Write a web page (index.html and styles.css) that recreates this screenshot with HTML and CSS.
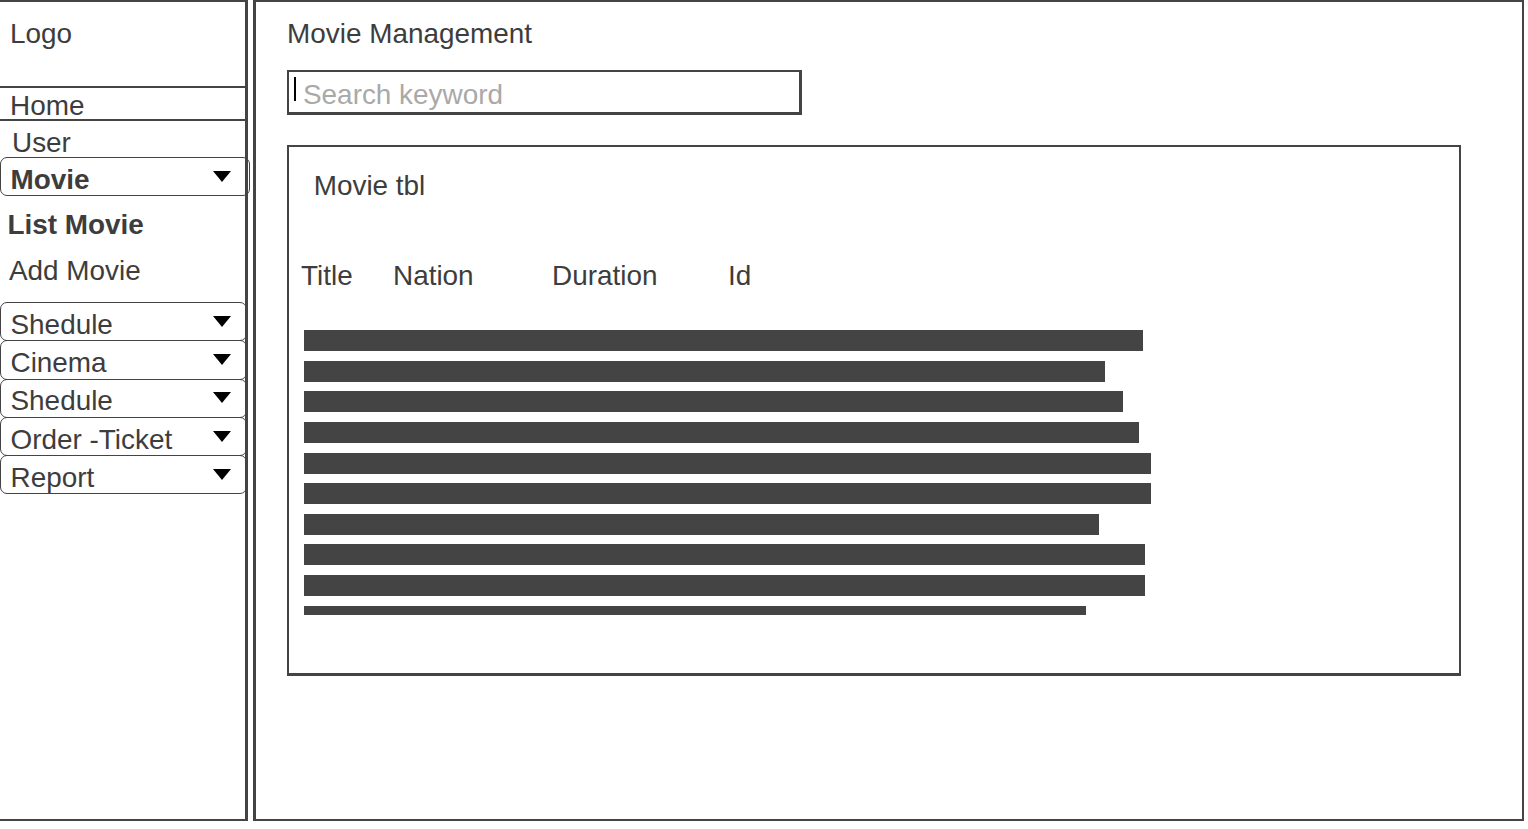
FILE: index.html
```html
<!DOCTYPE html>
<html lang="en">
<head>
<meta charset="utf-8">
<title>Movie Management</title>
<link rel="stylesheet" href="styles.css">
</head>
<body>
<div class="page">
  <aside class="sidebar">
    <div class="logo">Logo</div>
    <div class="nav-home">Home</div>
    <div class="nav-user">User</div>
    <div class="menu menu-open"><span class="menu-label bold">Movie</span><span class="caret"></span></div>
    <div class="sub sub-list bold">List Movie</div>
    <div class="sub sub-add">Add Movie</div>
    <div class="menu-group">
      <div class="menu"><span class="menu-label">Shedule</span><span class="caret"></span></div>
      <div class="menu"><span class="menu-label">Cinema</span><span class="caret"></span></div>
      <div class="menu"><span class="menu-label">Shedule</span><span class="caret"></span></div>
      <div class="menu"><span class="menu-label">Order -Ticket</span><span class="caret"></span></div>
      <div class="menu"><span class="menu-label">Report</span><span class="caret"></span></div>
    </div>
  </aside>
  <main class="main">
    <h1 class="title">Movie Management</h1>
    <div class="search"><span class="cursor"></span><input class="search-input" type="text" placeholder="Search keyword"></div>
    <section class="table">
      <div class="table-caption">Movie tbl</div>
      <div class="table-head">
        <span>Title</span><span>Nation</span><span>Duration</span><span>Id</span>
      </div>
      <div class="bars">
        <div class="bar" style="width:839px"></div>
        <div class="bar" style="width:801px"></div>
        <div class="bar" style="width:819px"></div>
        <div class="bar" style="width:835px"></div>
        <div class="bar" style="width:847px"></div>
        <div class="bar" style="width:847px"></div>
        <div class="bar" style="width:795px"></div>
        <div class="bar" style="width:841px"></div>
        <div class="bar" style="width:841px"></div>
        <div class="bar" style="width:782px"></div>
      </div>
    </section>
  </main>
</div>
</body>
</html>
```

FILE: styles.css
```css
* {
  box-sizing: border-box;
}

html,
body {
  margin: 0;
  padding: 0;
  background: #fff;
}

body {
  font-family: "Liberation Sans", Arial, sans-serif;
  font-size: 27.9px;
  line-height: 32px;
  color: #3d3d3d;
}

.bold {
  font-weight: bold;
}

.page {
  display: flex;
  align-items: flex-start;
  width: 1528px;
  height: 829px;
  overflow: hidden;
}

/* ---------- sidebar ---------- */
.sidebar {
  flex: none;
  width: 248px;
  height: 821px;
  border-top: 2px solid #444;
  border-bottom: 2px solid #444;
  border-right: 3px solid #444;
}

.logo {
  height: 86px;
  padding: 15.9px 0 0 10px;
  border-bottom: 2px solid #444;
}

.nav-home {
  height: 33px;
  padding: 1.8px 0 0 10px;
  border-bottom: 2px solid #444;
}

.nav-user {
  height: 36px;
  padding: 5.6px 0 0 12px;
}

.menu {
  display: flex;
  align-items: flex-start;
  width: 247px;
  height: 39.2px;
  padding: 5.7px 0 0 9.5px;
  border: 1px solid #444;
  border-radius: 7px;
  white-space: nowrap;
}

.menu-open {
  width: 250px;
  height: 39px;
}

.caret {
  flex: none;
  width: 0;
  height: 0;
  margin: 7px 15px 0 auto;
  border-left: 9px solid transparent;
  border-right: 9px solid transparent;
  border-top: 11px solid #000;
}

.menu-open .caret {
  margin-right: 18px;
}

.sub-list {
  margin-top: 13px;
  padding-left: 7.5px;
}

.sub-add {
  margin-top: 13.7px;
  padding-left: 9px;
}

.menu-group {
  margin-top: 15.6px;
}

.menu-group .menu + .menu {
  margin-top: -1px;
}

/* ---------- main ---------- */
.main {
  flex: none;
  width: 1271px;
  height: 821px;
  margin-left: 5px;
  padding: 16.3px 0 0 31px;
  border-top: 2px solid #444;
  border-bottom: 2px solid #444;
  border-left: 3px solid #444;
  border-right: 2px solid #444;
}

.title {
  margin: 0;
  font-size: inherit;
  font-weight: normal;
  line-height: 32px;
}

.search {
  display: flex;
  align-items: flex-start;
  width: 515px;
  height: 45px;
  margin-top: 19.7px;
  padding-left: 5px;
  border: 2px solid #444;
  border-width: 2px 3px 3px 2px;
}

.cursor {
  flex: none;
  width: 2px;
  height: 24px;
  margin-top: 5px;
  background: #000;
}

.search-input {
  flex: 1;
  min-width: 0;
  height: 32px;
  margin: 6.6px 0 0 7px;
  padding: 0;
  border: 0;
  outline: none;
  background: transparent;
  font: inherit;
  line-height: 32px;
  color: #3d3d3d;
}

.search-input::placeholder {
  color: #a9a9a9;
  opacity: 1;
}

.table {
  width: 1174px;
  height: 531px;
  margin-top: 30px;
  padding: 22.6px 0 0 12px;
  border: solid #444;
  border-width: 2px 2px 3px 2px;
}

.table-caption {
  margin-left: 12.7px;
}

.table-head {
  display: grid;
  grid-template-columns: 92px 159px 176px auto;
  margin-top: 58.6px;
}

.bars {
  display: flex;
  flex-direction: column;
  align-items: flex-start;
  gap: 9.65px;
  height: 285px;
  margin: 37.8px 0 0 3px;
  overflow: hidden;
}

.bar {
  flex: none;
  height: 21px;
  background: #444;
}
```
